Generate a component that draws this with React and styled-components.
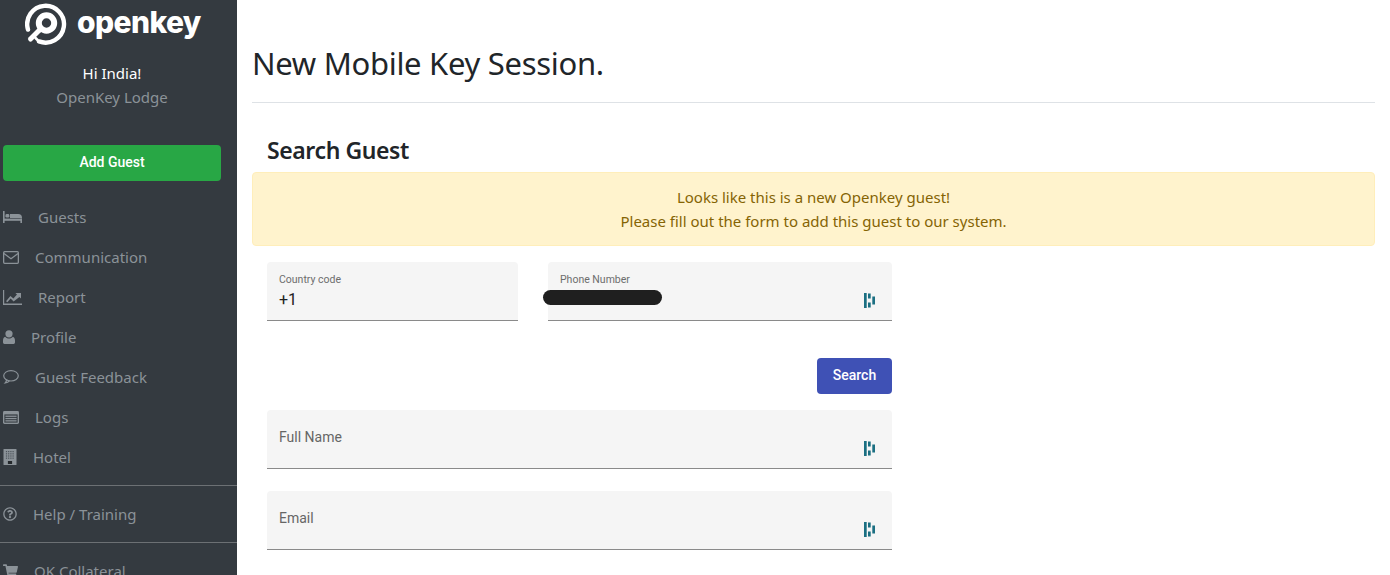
// App.jsx
import React from 'react';
import styled, { createGlobalStyle } from 'styled-components';
import { FaRegQuestionCircle, FaShoppingCart } from 'react-icons/fa';

const GlobalStyle = createGlobalStyle`
  html, body {
    margin: 0;
    height: 575px;
    overflow: hidden;
    background: #fff;
    font-family: "Noto Sans", "Open Sans", sans-serif;
  }
`;

const Page = styled.div`
  display: flex;
  width: 1390px;
  height: 575px;
  overflow: hidden;
`;

const Sidebar = styled.aside`
  flex: 0 0 237px;
  height: 575px;
  background: #343a40;
  overflow: hidden;
`;

const Brand = styled.div`
  display: flex;
  align-items: center;
  height: 48px;
  padding-left: 25px;
  gap: 10px;
`;

const BrandName = styled.span`
  color: #fff;
  font-family: "Inter", sans-serif;
  font-size: 30px;
  font-weight: 800;
  letter-spacing: -0.6px;
  line-height: 1;
  margin-top: -4px;
`;

const Welcome = styled.div`
  width: 224px;
  margin-top: 13px;
  text-align: center;
  font-size: 15px;
  line-height: 24px;
`;

const Greeting = styled.div`
  color: #fff;
`;

const Lodge = styled.div`
  color: #8b9298;
`;

const AddGuest = styled.button`
  display: block;
  width: 218px;
  height: 36px;
  margin: 36px 0 0 3px;
  padding: 0 0 2px;
  border: 0;
  border-radius: 4px;
  background: #28a745;
  color: #fff;
  font-family: "Roboto", sans-serif;
  font-size: 14px;
  font-weight: 500;
`;

const Nav = styled.nav`
  margin-top: 16px;
`;

const NavItem = styled.div`
  display: flex;
  align-items: center;
  gap: 16px;
  height: 40px;
  padding-left: 3px;
  color: #8b9298;
  font-size: 15px;
`;

const NavIcon = styled.span`
  display: flex;
  justify-content: center;
  width: ${(p) => p.$width}px;

  svg {
    display: block;
    width: ${(p) => p.$width}px;
    height: ${(p) => p.$height || 16}px;
  }
`;

const Divider = styled.hr`
  margin: 8px 0;
  border: 0;
  border-top: 1px solid #6c7074;
`;

const Main = styled.main`
  flex: 0 0 1123px;
  margin-left: 15px;
`;

const Title = styled.h1`
  box-sizing: content-box;
  height: 62px;
  margin: 0;
  padding-top: 40px;
  border-bottom: 1px solid #dee2e6;
  color: #212529;
  font-size: 31px;
  font-weight: 400;
  line-height: 46px;
  letter-spacing: -0.3px;
`;

const Section = styled.h2`
  margin: 31px 0 0 15px;
  color: #212529;
  font-size: 23px;
  font-weight: 600;
  line-height: 32px;
  letter-spacing: -0.4px;
`;

const Alert = styled.div`
  margin-top: 6px;
  padding: 12px 20px;
  border: 1px solid #ffeeba;
  border-radius: 4px;
  background: #fff3cd;
  color: #856404;
  text-align: center;
  font-size: 15px;
  line-height: 24px;
`;

const Form = styled.form`
  width: 625px;
  margin: 16px 0 0 15px;
  font-family: "Roboto", sans-serif;
`;

const Row = styled.div`
  display: flex;
  gap: 30px;
`;

const Field = styled.div`
  position: relative;
  box-sizing: border-box;
  flex: ${(p) => p.$flex};
  height: 59px;
  margin-bottom: ${(p) => p.$gap}px;
  padding: ${(p) => (p.$filled ? '12px 12px 0' : '18px 12px 0')};
  background: #f5f5f5;
  border-bottom: 1px solid #8a8a8a;
  border-radius: 4px 4px 0 0;
`;

const Label = styled.div`
  color: ${(p) => (p.$small ? '#6d6d6d' : '#666')};
  font-size: ${(p) => (p.$small ? 10.5 : 14)}px;
  line-height: ${(p) => (p.$small ? 12 : 18)}px;
`;

const Value = styled.div`
  margin-top: 5px;
  color: #212121;
  font-size: 16px;
  line-height: 18px;
`;

const Scribble = styled.div`
  position: absolute;
  left: -5px;
  top: 28px;
  width: 119px;
  height: 15px;
  border-radius: 8px;
  background: #1f1f1f;
`;

const DashMark = styled.svg`
  position: absolute;
  right: 17px;
  bottom: 12px;
  width: 11px;
  height: 15px;
`;

const ButtonRow = styled.div`
  display: flex;
  justify-content: flex-end;
  margin: 37px 0 16px;
`;

const SearchButton = styled.button`
  width: 75px;
  height: 36px;
  padding: 0 0 2px;
  border: 0;
  border-radius: 4px;
  background: #3f51b5;
  color: #fff;
  font-family: "Roboto", sans-serif;
  font-size: 14px;
  font-weight: 500;
`;

const BedIcon = () => (
  <svg viewBox="0 0 19 12" fill="currentColor">
    <rect x="0" y="0" width="1.6" height="12" />
    <rect x="2.4" y="3" width="4" height="3.6" rx="1.4" />
    <path d="M7 3h8.2A3.8 3.8 0 0 1 19 6.8V7H7z" />
    <rect x="0" y="7.6" width="19" height="2.2" />
    <rect x="17.4" y="7.6" width="1.6" height="4.4" />
  </svg>
);

const EnvelopeIcon = () => (
  <svg viewBox="0 0 16 13" fill="none" stroke="currentColor" strokeWidth="1.3">
    <rect x="0.65" y="0.65" width="14.7" height="11.7" rx="1" />
    <path d="M1 2.6 L8 7.8 L15 2.6" />
  </svg>
);

const ChartIcon = () => (
  <svg viewBox="0 0 19 15" fill="currentColor">
    <path d="M0 0h1.2v13.6H19V15H0z" />
    <path d="M3 11.2 L7.4 6 L10.4 8.6 L14 4.6 L12.4 3 H18 V8.6 L16.4 7 L10.6 11.4 L7.6 8.6 L4.4 12.2z" />
  </svg>
);

const UserIcon = () => (
  <svg viewBox="0 0 12 14" fill="currentColor">
    <circle cx="6" cy="3.8" r="3.6" />
    <path d="M2.2 6.8C3 8 4.4 8.6 6 8.6S9 8 9.8 6.8C11.2 7.2 12 8.6 12 10.6V12.6A1.4 1.4 0 0 1 10.6 14H1.4A1.4 1.4 0 0 1 0 12.6V10.6C0 8.6 .8 7.2 2.2 6.8z" />
  </svg>
);

const CommentIcon = () => (
  <svg viewBox="0 0 16 14" fill="none" stroke="currentColor" strokeWidth="1.2">
    <ellipse cx="8" cy="5.8" rx="7.3" ry="5.2" />
    <path d="M3.6 9.6 C3.6 11 3 12.2 2.2 13 C4 12.8 5.4 12.2 6.4 10.9" />
  </svg>
);

const LogsIcon = () => (
  <svg viewBox="0 0 16 13">
    <rect width="16" height="13" rx="1.4" fill="currentColor" />
    <rect x="1.4" y="3.4" width="13.2" height="8.2" fill="#343a40" />
    <rect x="2.4" y="4.6" width="11.2" height="1.3" fill="currentColor" />
    <rect x="2.4" y="6.9" width="11.2" height="1.3" fill="currentColor" />
    <rect x="2.4" y="9.2" width="11.2" height="1.3" fill="currentColor" />
  </svg>
);

const HotelIcon = () => (
  <svg viewBox="0 0 13 16">
    <rect width="13" height="16" rx="0.6" fill="currentColor" />
    {[2, 4.2, 6.4, 8.6].map((x) =>
      [2, 4.2, 6.4, 8.6].map((y) => (
        <rect key={`${x}-${y}`} x={x + 0.4} y={y} width="1.2" height="1.2" fill="#4d545b" />
      )),
    )}
    <rect x="4.4" y="12" width="4.2" height="3" fill="#24282c" />
  </svg>
);

const navTop = [
  { icon: BedIcon, label: 'Guests', width: 19, height: 12 },
  { icon: EnvelopeIcon, label: 'Communication', width: 16, height: 13 },
  { icon: ChartIcon, label: 'Report', width: 19, height: 15 },
  { icon: UserIcon, label: 'Profile', width: 12, height: 14 },
  { icon: CommentIcon, label: 'Guest Feedback', width: 16, height: 14 },
  { icon: LogsIcon, label: 'Logs', width: 16, height: 13 },
  { icon: HotelIcon, label: 'Hotel', width: 14, height: 16 },
];

const LogoMark = () => (
  <svg width="42" height="42" viewBox="0 0 42 42" fill="none" stroke="#fff">
    <path d="M3 26.6 A18.4 18.4 0 1 1 14 38.4" strokeWidth="4.4" strokeLinecap="round" />
    <circle cx="21.5" cy="20" r="7.7" strokeWidth="6" />
    <path d="M14 27.5 L5.5 36" strokeWidth="5" strokeLinecap="round" />
    <path d="M10.5 35 L12.5 37" strokeWidth="2.6" strokeLinecap="round" />
  </svg>
);

const DashlaneIcon = () => (
  <DashMark viewBox="0 0 11 15" fill="#1b6f82">
    <rect x="0" y="0" width="2.7" height="15" />
    <rect x="4" y="0.5" width="2.7" height="5" />
    <rect x="4" y="9.5" width="2.7" height="5" />
    <rect x="8.3" y="3.5" width="2.7" height="8" />
  </DashMark>
);

const SidebarItem = ({ icon: Icon, label, width, height }) => (
  <NavItem>
    <NavIcon $width={width} $height={height}>
      <Icon />
    </NavIcon>
    {label}
  </NavItem>
);

const App = () => {
  return (
    <Page>
      <GlobalStyle />
      <Sidebar>
        <Brand>
          <LogoMark />
          <BrandName>openkey</BrandName>
        </Brand>
        <Welcome>
          <Greeting>Hi India!</Greeting>
          <Lodge>OpenKey Lodge</Lodge>
        </Welcome>
        <AddGuest type="button">Add Guest</AddGuest>
        <Nav>
          {navTop.map((item) => (
            <SidebarItem key={item.label} {...item} />
          ))}
          <Divider />
          <SidebarItem icon={FaRegQuestionCircle} label="Help / Training" width={14} height={14} />
          <Divider />
          <SidebarItem icon={FaShoppingCart} label="OK Collateral" width={15} />
        </Nav>
      </Sidebar>
      <Main>
        <Title>New Mobile Key Session.</Title>
        <Section>Search Guest</Section>
        <Alert>
          Looks like this is a new Openkey guest!
          <br />
          Please fill out the form to add this guest to our system.
        </Alert>
        <Form>
          <Row>
            <Field $flex="0 0 251px" $filled>
              <Label $small>Country code</Label>
              <Value>+1</Value>
            </Field>
            <Field $flex="1" $filled>
              <Label $small>Phone Number</Label>
              <Scribble />
              <DashlaneIcon />
            </Field>
          </Row>
          <ButtonRow>
            <SearchButton type="button">Search</SearchButton>
          </ButtonRow>
          <Field $gap={22}>
            <Label>Full Name</Label>
            <DashlaneIcon />
          </Field>
          <Field>
            <Label>Email</Label>
            <DashlaneIcon />
          </Field>
        </Form>
      </Main>
    </Page>
  );
};

export default App;
